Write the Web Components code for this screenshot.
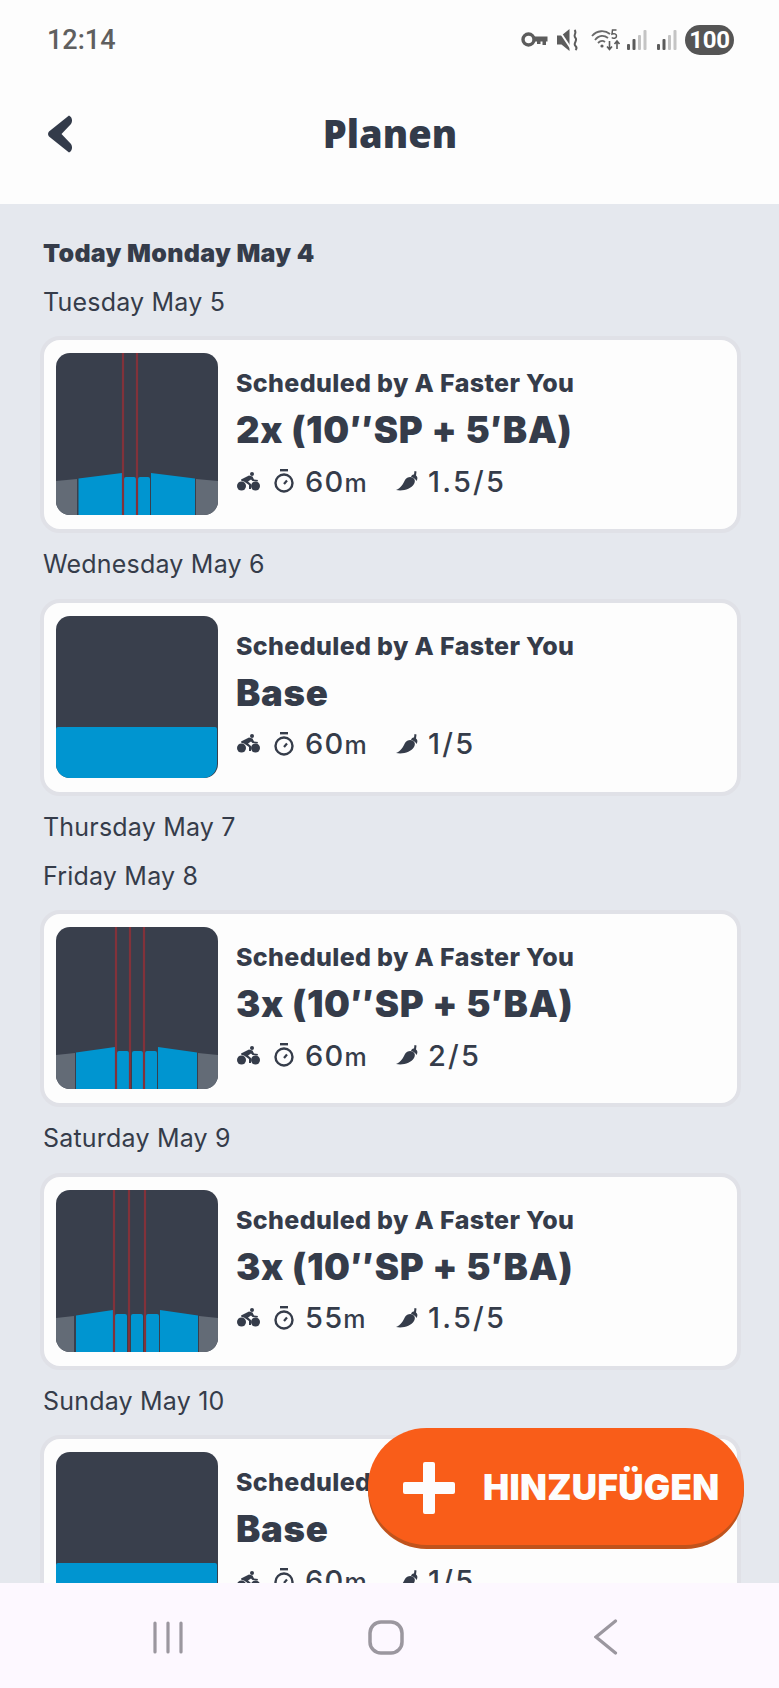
<!DOCTYPE html>
<html lang="de">
<head>
<meta charset="utf-8">
<title>Planen</title>
<style>
  html, body { margin: 0; padding: 0; background: #e5e8ee; }
  body { font-family: Inter, "Liberation Sans", sans-serif; color: #353c4a; }
</style>
</head>
<body>
<plan-screen>
  <status-bar slot="status" time="12:14" battery="100"></status-bar>
  <app-header slot="header">Planen</app-header>

  <day-label today>Today Monday May 4</day-label>
  <day-label>Tuesday May 5</day-label>
  <workout-card duration="60" intensity="1.5/5">
    <workout-chart slot="chart" left="21 22.5 66" small="68-80 82-94" right="95 139 140" red="67 81"></workout-chart>
    2x (10″SP + 5′BA)
  </workout-card>
  <day-label>Wednesday May 6</day-label>
  <workout-card duration="60" intensity="1/5">
    <workout-chart slot="chart" base></workout-chart>
    Base
  </workout-card>
  <day-label>Thursday May 7</day-label>
  <day-label>Friday May 8</day-label>
  <workout-card duration="60" intensity="2/5">
    <workout-chart slot="chart" left="19 20 59" small="61-73 76-87 89-101" right="102 141 142" red="60 74 88"></workout-chart>
    3x (10″SP + 5′BA)
  </workout-card>
  <day-label>Saturday May 9</day-label>
  <workout-card duration="55" intensity="1.5/5">
    <workout-chart slot="chart" left="18 20 57" small="59-71 75-87 90-103" right="104 142 143" red="58 73 89"></workout-chart>
    3x (10″SP + 5′BA)
  </workout-card>
  <day-label>Sunday May 10</day-label>
  <workout-card duration="60" intensity="1/5">
    <workout-chart slot="chart" base></workout-chart>
    Base
  </workout-card>

  <add-button slot="fab">HINZUFÜGEN</add-button>
  <nav-bar slot="nav"></nav-bar>
</plan-screen>

<script>
class PlanScreen extends HTMLElement {
  constructor () {
    super();
    this.attachShadow({ mode: 'open' });
    this.shadowRoot.innerHTML = `
      <style>
        :host { display: flex; flex-direction: column; position: relative; width: 779px; height: 1688px; overflow: hidden; background: #e5e8ee; }
        .list { flex: 1; min-height: 0; overflow: hidden; padding: 25px 38px 0 40px; }
        .fab { position: absolute; left: 368px; top: 1428px; }
      </style>
      <slot name="status"></slot>
      <slot name="header"></slot>
      <div class="list"><slot></slot></div>
      <slot name="nav"></slot>
      <div class="fab"><slot name="fab"></slot></div>
    `;
  }
}

class StatusBar extends HTMLElement {
  constructor () {
    super();
    this.attachShadow({ mode: 'open' });
    const signal = `
      <svg width="20" height="20" viewBox="0 0 20 20">
        <rect x="0" y="14" width="3" height="6" rx="1" fill="#5c5c5c"/>
        <rect x="5.5" y="9" width="3" height="11" rx="1" fill="#5c5c5c"/>
        <rect x="11" y="5" width="3" height="15" rx="1" fill="#c4c4c4"/>
        <rect x="16.5" y="0" width="3" height="20" rx="1" fill="#c4c4c4"/>
      </svg>`;
    this.shadowRoot.innerHTML = `
      <style>
        :host { display: flex; align-items: center; box-sizing: border-box; height: 79px; padding: 0 45px 0 47px; background: #fdfdfd; color: #5f5f5f; font-family: Roboto, "Liberation Sans", sans-serif; }
        .time { font-size: 27px; font-weight: 500; flex: 1; }
        .icons { display: flex; align-items: center; }
        svg { display: block; }
        .key { margin-right: 9px; }
        .mute { margin-right: 13px; }
        .wifi { margin-right: 6px; }
        .sig1 { margin-right: 10px; }
        .sig2 { margin-right: 8px; }
        .batt { width: 49px; height: 30px; border-radius: 15px; background: #555; color: #fff; font-size: 24px; font-weight: 700; letter-spacing: -.3px; display: flex; align-items: center; justify-content: center; }
      </style>
      <span class="time">${this.getAttribute('time')}</span>
      <div class="icons">
        <svg class="key" width="27" height="15" viewBox="0 0 27 15" fill="none">
          <circle cx="7.5" cy="7.500" r="5.500" stroke="#5c5c5c" stroke-width="3.400"/>
          <path d="M13 4.500H26.500V9.500H25V13H21.500V9.500H19.500V12H16V9.500H13Z" fill="#5c5c5c"/>
        </svg>
        <svg class="mute" width="21" height="22" viewBox="0 0 21 22" fill="none">
          <path d="M0 6.500H4.500L12.500 0V22L4.500 15.500H0Z" fill="#5c5c5c"/>
          <path d="M1 0L15 21" stroke="#fdfdfd" stroke-width="2"/>
          <path d="M17.500 1C20.500 4 15.500 6 18.500 9C21 12 15.500 14 18.500 17C20 18.500 19.500 20 18.500 21" stroke="#5c5c5c" stroke-width="2"/>
        </svg>
        <svg class="wifi" width="30" height="22" viewBox="0 0 30 22" fill="none">
          <path d="M1 7C6 1 14 1 19 5" stroke="#6a6a6a" stroke-width="1.800"/>
          <path d="M4 11C8 6 13 6 17 9" stroke="#6a6a6a" stroke-width="1.800"/>
          <path d="M7 14C9.500 11.500 12 11.500 14 13" stroke="#6a6a6a" stroke-width="1.800"/>
          <circle cx="11" cy="17" r="1.600" fill="#5c5c5c"/>
          <path d="M18.500 12V20M16 17.500L18.500 20.500L21 17.500M26 20V12.500M23.500 15L26 12L28.500 15" stroke="#5c5c5c" stroke-width="1.600"/>
          <path d="M25.500 1H21.500L21 5C23 4.200 25.500 4.800 25.500 7C25.500 9.500 22 9.800 20.800 8.500" stroke="#5c5c5c" stroke-width="1.500"/>
        </svg>
        <span class="sig1">${signal}</span>
        <span class="sig2">${signal}</span>
        <span class="batt">${this.getAttribute('battery')}</span>
      </div>
    `;
  }
}

class AppHeader extends HTMLElement {
  constructor () {
    super();
    this.attachShadow({ mode: 'open' });
    this.shadowRoot.innerHTML = `
      <style>
        :host { display: grid; grid-template-columns: 1fr auto 1fr; align-items: center; box-sizing: border-box; height: 125px; padding: 0 47px 18px 48px; background: #fdfdfd; }
        svg { display: block; margin-top: 2px; }
        .title { font-family: "Open Sans", "Liberation Sans", sans-serif; font-size: 38px; font-weight: 800; color: #333b4a; }
      </style>
      <svg width="26" height="38" viewBox="0 0 26 38">
        <path d="M21 0.500C24 2 25 6 23 9L13.500 19L23 29C25 32 24 36 21 37.500L1 21.500C-.3 20.200 -.3 17.800 1 16.500Z" fill="#333b4a"/>
      </svg>
      <span class="title"><slot></slot></span>
      <span></span>
    `;
  }
}

class DayLabel extends HTMLElement {
  constructor () {
    super();
    this.attachShadow({ mode: 'open' });
    this.shadowRoot.innerHTML = `
      <style>
        :host { display: flex; align-items: center; box-sizing: border-box; height: 49px; padding: 0 0 2px 3px; font-size: 25px; font-weight: 400; letter-spacing: .2px; color: #353c4a; }
        :host([today]) { font-weight: 900; letter-spacing: .3px; }
      </style>
      <slot></slot>
    `;
  }
}

class WorkoutChart extends HTMLElement {
  constructor () {
    super();
    this.attachShadow({ mode: 'open' });
    this.shadowRoot.innerHTML = `
      <style>
        :host { display: block; width: 162px; height: 162px; }
        svg { display: block; }
      </style>
      <svg width="162" height="162" viewBox="0 0 162 162">${this.hasAttribute('base') ? this.baseShapes() : this.intervalShapes()}</svg>
    `;
  }

  baseShapes () {
    return `
      <rect width="162" height="162" rx="14" fill="#393f4c"/>
      <path d="M0 113a2 2 0 0 1 2-2H159a2 2 0 0 1 2 2V148a14 14 0 0 1-14 14H14a14 14 0 0 1-14-14Z" fill="#0095d0"/>`;
  }

  intervalShapes () {
    const nums = name => this.getAttribute(name).split(' ').map(Number);
    const [greyEnd, blueStart, blueEnd] = nums('left');
    const [blue2Start, blue2End, greyStart] = nums('right');
    const small = this.getAttribute('small').split(' ').map(s => s.split('-').map(Number));
    const blocks = small.map(([a, b]) => `<path d="M${a} 162V126a2 2 0 0 1 2-2H${b - 2}a2 2 0 0 1 2 2V162Z" fill="#0095d0"/>`).join('');
    const reds = nums('red').map(x => `<rect x="${x - 1.1}" y="0" width="2.200" height="162" fill="#82323a"/>`).join('');
    return `
      <defs><clipPath id="c"><rect width="162" height="162" rx="14"/></clipPath></defs>
      <g clip-path="url(#c)">
        <rect width="162" height="162" fill="#393f4c"/>
        <path d="M0 128L${greyEnd} 126V162H0Z" fill="#636b76"/>
        <path d="M${blueStart} 125.500L${blueEnd} 120V162H${blueStart}Z" fill="#0095d0"/>
        ${blocks}
        <path d="M${blue2Start} 120L${blue2End} 125.500V162H${blue2Start}Z" fill="#0095d0"/>
        <path d="M${greyStart} 126L162 128V162H${greyStart}Z" fill="#636b76"/>
        ${reds}
      </g>`;
  }
}

class WorkoutCard extends HTMLElement {
  constructor () {
    super();
    this.attachShadow({ mode: 'open' });
    this.shadowRoot.innerHTML = `
      <style>
        :host { display: flex; box-sizing: border-box; height: 197px; margin: 9px 0 7.5px; padding: 13px 12px; gap: 18px; background: #fdfdfd; border: 4px solid #e0e1e7; border-radius: 20px; color: #353c4a; }
        .info { display: flex; flex-direction: column; padding-top: 8px; min-width: 0; }
        .by { height: 44px; line-height: 44px; font-size: 25px; font-weight: 800; letter-spacing: .35px; white-space: nowrap; }
        .title { height: 50px; line-height: 50px; font-size: 36.500px; font-weight: 900; letter-spacing: .7px; white-space: nowrap; }
        .meta { display: grid; grid-template-columns: 160px auto; height: 52px; align-items: center; font-size: 29px; font-weight: 500; letter-spacing: 1.200px; }
        .group { display: flex; align-items: center; }
        .group + .group { letter-spacing: 2.200px; }
        .bike { margin: 0 14px 0 1px; }
        .timer { margin-right: 11px; }
        .chili { margin-right: 10px; }
        .unit { font-size: 25px; letter-spacing: 0; }
        svg { display: block; }
      </style>
      <slot name="chart"></slot>
      <div class="info">
        <div class="by">Scheduled by A Faster You</div>
        <div class="title"><slot></slot></div>
        <div class="meta">
          <div class="group">
            <svg class="bike" width="23" height="19" viewBox="0 0 23 19" fill="#353c4a">
              <circle cx="4.500" cy="14" r="4.500"/>
              <circle cx="18.500" cy="14" r="4.500"/>
              <circle cx="15" cy="2" r="2"/>
              <path d="M4 7.500L12 3.500L15.500 4.500L17 7.500L21 8L20.500 9.500L15.500 9L14 7.500L11 9.500L14 12V17H12V13L7 9.500L4.500 9Z"/>
            </svg>
            <svg class="timer" width="20" height="24" viewBox="0 0 20 24" fill="none" stroke="#353c4a">
              <path d="M6 1.200H14" stroke-width="2.400"/>
              <circle cx="10" cy="14" r="8.500" stroke-width="2.400"/>
              <path d="M10 15L13 11.500" stroke-width="2.200"/>
            </svg>
            <span>${this.getAttribute('duration')}<span class="unit">m</span></span>
          </div>
          <div class="group">
            <svg class="chili" width="22" height="20" viewBox="0 0 22 20" fill="#353c4a">
              <path d="M0 19C5 17 7 13 9 9C10.500 6.500 14 5 16.500 6.500C19 8 19.500 10 18 13C15 18 7 20.500 0 19Z"/>
              <path d="M15 6C15.500 4 17 3.500 18 3.500L18.500 0L20.500 .5L20 4.500C21.500 5.500 22 7.500 20.500 10C19.500 8 17.500 6.500 15 6Z"/>
            </svg>
            <span>${this.getAttribute('intensity')}</span>
          </div>
        </div>
      </div>
    `;
  }
}

class AddButton extends HTMLElement {
  constructor () {
    super();
    this.attachShadow({ mode: 'open' });
    this.shadowRoot.innerHTML = `
      <style>
        :host { display: flex; align-items: center; box-sizing: border-box; width: 376px; height: 117px; padding: 0 0 0 35px; gap: 28px; border-radius: 59px; background: #f95d19; box-shadow: 0 4px 0 #c0531c; color: #fdfdfd; font-size: 35px; font-weight: 900; letter-spacing: .3px; }
        svg { display: block; margin-top: 2px; }
      </style>
      <svg width="52" height="52" viewBox="0 0 52 52"><path d="M20 2a2 2 0 0 1 2-2H30a2 2 0 0 1 2 2V20H50a2 2 0 0 1 2 2V30a2 2 0 0 1-2 2H32V50a2 2 0 0 1-2 2H22a2 2 0 0 1-2-2V32H2a2 2 0 0 1-2-2V22a2 2 0 0 1 2-2H20Z" fill="#fdfdfd"/></svg>
      <slot></slot>
    `;
  }
}

class NavBar extends HTMLElement {
  constructor () {
    super();
    this.attachShadow({ mode: 'open' });
    this.shadowRoot.innerHTML = `
      <style>
        :host { display: grid; grid-template-columns: repeat(3, 1fr); justify-items: center; align-items: center; height: 105px; background: #fdf8ff; }
        svg { display: block; margin-top: 3px; }
        .menu { margin-left: 76px; }
        .home { margin-right: 6px; }
        .back { margin-right: 86px; }
      </style>
      <svg class="menu" width="30" height="33" viewBox="0 0 30 33" stroke="#9b979f" stroke-width="3.200" stroke-linecap="round">
        <path d="M2 2V31M15 2V31M28 2V31"/>
      </svg>
      <svg class="home" width="36" height="35" viewBox="0 0 36 35" fill="none" stroke="#9b979f" stroke-width="3.500">
        <rect x="2" y="2" width="32" height="31" rx="11"/>
      </svg>
      <svg class="back" width="24" height="36" viewBox="0 0 24 36" fill="none" stroke="#9b979f" stroke-width="3.200" stroke-linecap="round">
        <path d="M21.500 2L2 18L21.500 34"/>
      </svg>
    `;
  }
}

customElements.define('plan-screen', PlanScreen);
customElements.define('status-bar', StatusBar);
customElements.define('app-header', AppHeader);
customElements.define('day-label', DayLabel);
customElements.define('workout-chart', WorkoutChart);
customElements.define('workout-card', WorkoutCard);
customElements.define('add-button', AddButton);
customElements.define('nav-bar', NavBar);
</script>
</body>
</html>
